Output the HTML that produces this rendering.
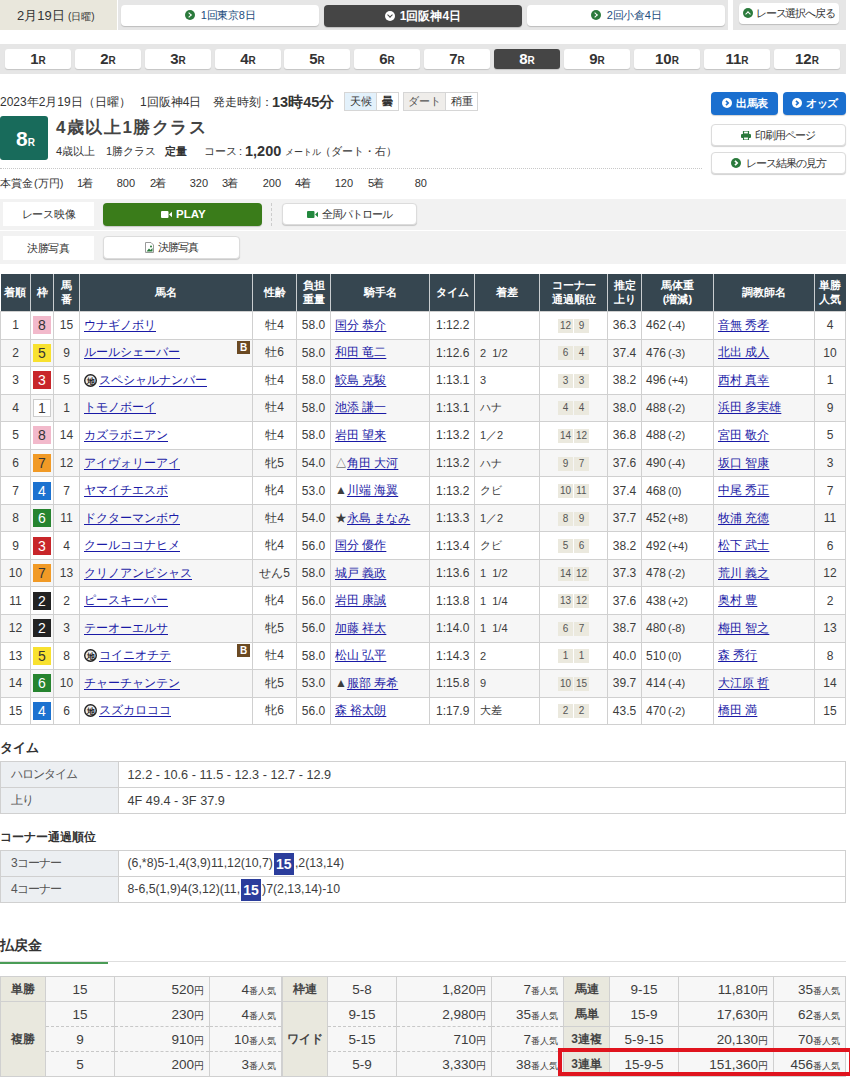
<!DOCTYPE html>
<html><head><meta charset="utf-8">
<style>
*{box-sizing:border-box;margin:0;padding:0}
html,body{width:850px;height:1078px;overflow:hidden;background:#fff}
body{font-family:"Liberation Sans",sans-serif;color:#333;font-size:12px;position:relative}
.abs{position:absolute}
.btn{position:absolute;background:#fff;border-radius:4px;box-shadow:0 1px 1px rgba(0,0,0,.18);text-align:center;white-space:nowrap}
.ico{display:inline-block;width:10px;height:10px;border-radius:50%;background:#2b7a3c;position:relative;vertical-align:-1px;margin-right:5px}
.ico:after{content:"";position:absolute;left:2.5px;top:3px;width:3px;height:3px;border-right:1.6px solid #fff;border-top:1.6px solid #fff;transform:rotate(45deg)}
.ico.w{background:#fff}
.ico.w:after{border-color:#1a6fcf}
.ico.up:after{left:3px;top:4px;transform:rotate(-45deg)}
.ico.dn{background:#fff}
.ico.dn:after{border-color:#454545;left:3px;top:2px;transform:rotate(135deg)}
/* race nums */
.rn{position:absolute;top:49px;height:20px;width:66px;background:#fff;border-radius:3px;box-shadow:0 1px 1px rgba(0,0,0,.15);text-align:center;font-weight:bold;font-size:15px;line-height:20px;color:#333}
.rn small{font-size:10px;font-weight:bold}
.rn.on{background:#454545;color:#fff}
/* main table */
table{border-collapse:collapse}
#res{position:absolute;left:0;top:274px;width:845px;table-layout:fixed}
#res th{background:#364650;color:#fff;font-weight:bold;font-size:11px;line-height:13.5px;height:37.5px;border-left:1px solid #c9cdd0;padding:0}
#res th:first-child{border-left:none}
#res td{color:#3d3d3d;border:1px solid #d0d0d0;height:27.55px;padding:0;font-size:12px;text-align:center;white-space:nowrap}
#res tr:nth-child(odd) td{background:#f6f6f6}
#res td.l{text-align:left;padding-left:4px}
#res a{color:#1a1aa6;text-decoration:underline;text-underline-offset:2px}
.wk{display:inline-block;width:18px;height:18px;line-height:18px;font-size:14px;text-align:center;vertical-align:middle}
.w1{background:#fff;border:1px solid #ccc;line-height:16px}
.w2{background:#222;color:#fff}
.w3{background:#c8262a;color:#fff}
.w4{background:#1c72d0;color:#fff}
.w5{background:#f8e12f;color:#333}
.w6{background:#26842f;color:#fff}
.w7{background:#f19a26;color:#333}
.w8{background:#f2b9cb;color:#333}
.cp{display:inline-block;width:14.5px;height:14px;line-height:14px;background:#ebe9de;font-size:10px;color:#555}.cp+.cp{margin-left:1.5px}
#res td.mg{font-size:11px;padding-left:5px}
#res td.tm{padding-left:6px}
.bk{position:absolute;right:2px;top:1.5px;width:13px;height:13px;background:#6b4a23;color:#fff;font-size:10px;line-height:13px;text-align:center;font-weight:bold}
.ch{display:inline-block;vertical-align:-3px;margin-right:2px}
.h2{position:absolute;left:0;font-weight:bold;font-size:13px;color:#333}
.st{position:absolute;left:0;width:846px}
.st td{color:#3d3d3d;border:1px solid #d0d0d0;height:26px;font-size:12.7px;padding-left:9px;white-space:nowrap}
.st.c td{font-size:12.3px}
.st td.h{background:#eceff2;width:117.5px;color:#555;padding-left:10px;font-size:12px;letter-spacing:-1px}
.p{position:absolute;top:976px;border-collapse:collapse}
.p td{color:#3d3d3d;border:1px solid #d0d0d0;height:25px;font-size:13.5px;background:#f7f7f7;text-align:center;white-space:nowrap;padding:1px 0 0 0}
.p td.h{background:#e9e8de;font-weight:bold;color:#444;font-size:12px}
.p td.r{text-align:right;padding-right:5px}
.p tr.d td:not(.h){border-top:1px dashed #c8c8c8}
.p tr.pd td:not(.h){border-bottom:1px dashed #c8c8c8}
.yen{font-size:10px}
.nk{font-size:9px}
.hl{display:inline-block;background:#2b3d9c;color:#fff;font-weight:bold;width:20px;text-align:center;height:22px;line-height:22px;font-size:14px;vertical-align:middle;margin:0 1px}
#res td.nm{position:relative}
.df{font-size:11px;margin-left:2px}
</style></head><body>

<!-- top bar -->
<div class="abs" style="left:0;top:0;width:117px;height:30px;background:#e9e7dc"></div>
<div class="abs" style="left:17px;top:8px;line-height:15px;font-size:13px;color:#333;white-space:nowrap">2月19日</div><div class="abs" style="left:68px;top:10px;line-height:13px;font-size:10px;color:#333;white-space:nowrap">(日曜)</div>
<div class="abs" style="left:118px;top:0;width:610px;height:30px;background:#e6e6e6"></div>
<div class="btn" style="left:121px;top:5px;width:198px;height:21px;line-height:20px;font-size:11px;letter-spacing:-0.3px;color:#1d4e7e"><span class="ico" style="margin-right:6px"></span>1回東京8日</div>
<div class="btn" style="left:324px;top:5px;width:198px;height:22px;line-height:22px;font-size:12px;font-weight:bold;color:#fff;background:#454545"><span class="ico dn"></span>1回阪神4日</div>
<div class="btn" style="left:527px;top:5px;width:198px;height:21px;line-height:20px;font-size:11px;letter-spacing:-0.3px;color:#1d4e7e"><span class="ico" style="margin-right:6px"></span>2回小倉4日</div>
<div class="abs" style="left:733px;top:0;width:113px;height:30px;background:#e6e6e6"></div>
<div class="btn" style="left:739px;top:3px;width:100px;height:21px;line-height:21px;font-size:11px;letter-spacing:-1.2px;color:#333;text-align:left;padding-left:4px"><span class="ico up" style="margin-right:3px"></span>レース選択へ戻る</div>

<!-- race numbers -->
<div class="abs" style="left:0;top:44px;width:846px;height:30px;background:#e6e6e6"></div>
<div class="rn" style="left:5px">1<small>R</small></div>
<div class="rn" style="left:75px">2<small>R</small></div>
<div class="rn" style="left:145px">3<small>R</small></div>
<div class="rn" style="left:215px">4<small>R</small></div>
<div class="rn" style="left:284px">5<small>R</small></div>
<div class="rn" style="left:354px">6<small>R</small></div>
<div class="rn" style="left:424px">7<small>R</small></div>
<div class="rn on" style="left:494px">8<small>R</small></div>
<div class="rn" style="left:564px">9<small>R</small></div>
<div class="rn" style="left:634px">10<small>R</small></div>
<div class="rn" style="left:704px">11<small>R</small></div>
<div class="rn" style="left:774px">12<small>R</small></div>

<!-- race info -->
<div class="abs" style="left:0;top:94px;font-size:12px;line-height:16px;white-space:nowrap;color:#333">2023年2月19日（日曜）</div>
<div class="abs" style="left:140px;top:94px;font-size:12px;line-height:16px;white-space:nowrap;color:#333">1回阪神4日</div>
<div class="abs" style="left:213px;top:94px;font-size:12px;line-height:16px;white-space:nowrap;color:#333">発走時刻：</div>
<div class="abs" style="left:272px;top:92px;font-size:14.5px;line-height:20px;white-space:nowrap;font-weight:bold;color:#333">13時45分</div>
<div class="abs" style="left:344px;top:92px;width:33px;height:19px;background:#e3f1fb;border:1px solid #d6d6d6;font-size:11px;line-height:17px;text-align:center">天候</div>
<div class="abs" style="left:376px;top:92px;width:23px;height:19px;background:#fff;border:1px solid #d6d6d6;font-size:11px;line-height:17px;text-align:center;font-weight:bold">曇</div>
<div class="abs" style="left:403px;top:92px;width:43px;height:19px;background:#efedea;border:1px solid #d6d6d6;font-size:11px;line-height:17px;text-align:center;color:#555">ダート</div>
<div class="abs" style="left:445px;top:92px;width:33px;height:19px;background:#fff;border:1px solid #d6d6d6;font-size:11px;line-height:17px;text-align:center">稍重</div>

<div class="abs" style="left:0;top:116px;width:48px;height:44px;background:#186b5b;border-radius:3px;color:#fff;text-align:center;line-height:46px;font-weight:bold;font-size:21px;white-space:nowrap;padding-left:3px">8<small style="font-size:10px">R</small></div>
<div class="abs" style="left:56px;top:117px;font-size:17px;letter-spacing:1.5px;font-weight:bold;line-height:22px;white-space:nowrap;color:#444">4歳以上1勝クラス</div>
<div class="abs" style="left:56px;top:143px;font-size:11px;line-height:16px;white-space:nowrap">4歳以上</div>
<div class="abs" style="left:106px;top:143px;font-size:11px;line-height:16px;white-space:nowrap">1勝クラス</div>
<div class="abs" style="left:165px;top:143px;font-size:11px;line-height:16px;white-space:nowrap;font-weight:bold">定量</div>
<div class="abs" style="left:204px;top:143px;font-size:11px;line-height:16px;white-space:nowrap">コース<span style="margin-left:2px">:</span></div>
<div class="abs" style="left:245px;top:141px;font-size:14.5px;line-height:20px;white-space:nowrap;font-weight:bold">1,200</div>
<div class="abs" style="left:285px;top:144px;font-size:9px;line-height:16px;white-space:nowrap">メートル</div>
<div class="abs" style="left:320px;top:143px;font-size:11px;line-height:16px;white-space:nowrap">（ダート・右）</div>

<div class="abs" style="left:0;top:168px;width:702px;border-top:1px dotted #c8c8c8"></div>
<div class="abs" style="left:0;top:176px;font-size:11px;line-height:14px;white-space:nowrap">本賞金<span style="margin-left:1px">(</span>万円<span style="margin-right:1px">)</span></div>
<div class="abs" style="left:77px;top:176px;font-size:11px;letter-spacing:-1px;line-height:14px">1着</div><div class="abs" style="left:105px;top:176px;width:30px;text-align:right;font-size:11px;line-height:14px">800</div>
<div class="abs" style="left:150px;top:176px;font-size:11px;letter-spacing:-1px;line-height:14px">2着</div><div class="abs" style="left:178px;top:176px;width:30px;text-align:right;font-size:11px;line-height:14px">320</div>
<div class="abs" style="left:222px;top:176px;font-size:11px;letter-spacing:-1px;line-height:14px">3着</div><div class="abs" style="left:251px;top:176px;width:30px;text-align:right;font-size:11px;line-height:14px">200</div>
<div class="abs" style="left:295px;top:176px;font-size:11px;letter-spacing:-1px;line-height:14px">4着</div><div class="abs" style="left:323px;top:176px;width:30px;text-align:right;font-size:11px;line-height:14px">120</div>
<div class="abs" style="left:368px;top:176px;font-size:11px;letter-spacing:-1px;line-height:14px">5着</div><div class="abs" style="left:397px;top:176px;width:30px;text-align:right;font-size:11px;line-height:14px">80</div>

<!-- right buttons -->
<div class="btn" style="left:711px;top:92px;width:67px;height:23px;background:#1a6fcf"></div>
<svg class="abs" style="left:722px;top:98px" width="10" height="10" viewBox="0 0 10 10"><circle cx="5" cy="5" r="5" fill="#fff"/><path d="M4 2.8 L6.2 5 L4 7.2" stroke="#1a6fcf" stroke-width="1.7" fill="none" transform="rotate(0 5 5)"/></svg>
<div class="abs" style="left:736px;top:96px;font-size:11px;line-height:15px;color:#fff;font-weight:bold;letter-spacing:-0.3px;white-space:nowrap">出馬表</div>
<div class="btn" style="left:783px;top:92px;width:63px;height:23px;background:#1a6fcf"></div>
<div class="abs" style="left:792px;top:98px"><svg class="abs" style="left:0px;top:0px" width="10" height="10" viewBox="0 0 10 10"><circle cx="5" cy="5" r="5" fill="#fff"/><path d="M4 2.8 L6.2 5 L4 7.2" stroke="#1a6fcf" stroke-width="1.7" fill="none" transform="rotate(0 5 5)"/></svg></div>
<div class="abs" style="left:806px;top:96px;font-size:11px;line-height:15px;color:#fff;font-weight:bold;letter-spacing:-0.3px;white-space:nowrap">オッズ</div>
<div class="btn" style="left:711px;top:124px;width:135px;height:22px;border:1px solid #dcdcdc"></div>
<svg class="abs" style="left:741px;top:131px" width="10" height="9" viewBox="0 0 10 9"><rect x="2.5" y="0" width="5" height="3" fill="none" stroke="#2a7a3c" stroke-width="1.2"/><rect x="0" y="3" width="10" height="4" rx="1" fill="#2a7a3c"/><rect x="2.5" y="6" width="5" height="3" fill="#fff" stroke="#2a7a3c" stroke-width="1.1"/></svg>
<div class="abs" style="left:755px;top:128px;font-size:11px;letter-spacing:-1px;line-height:14px;color:#333;white-space:nowrap">印刷用ページ</div>
<div class="btn" style="left:711px;top:152px;width:135px;height:22px;border:1px solid #dcdcdc"></div>
<svg class="abs" style="left:731px;top:158px" width="10" height="10" viewBox="0 0 10 10"><circle cx="5" cy="5" r="5" fill="#2a7a3c"/><path d="M4 2.8 L6.2 5 L4 7.2" stroke="#fff" stroke-width="1.7" fill="none" transform="rotate(0 5 5)"/></svg>
<div class="abs" style="left:746px;top:156px;font-size:11px;letter-spacing:-1px;line-height:14px;color:#333;white-space:nowrap">レース結果の見方</div>

<!-- video -->
<div class="abs" style="left:0;top:199px;width:846px;height:31px;background:#f2f2f2"></div>
<div class="abs" style="left:0;top:231px;width:846px;height:32.5px;background:#f2f2f2"></div>
<div class="abs" style="left:3px;top:202px;width:91px;height:23.5px;background:#fff;text-align:center;line-height:24px;font-size:11px;letter-spacing:-0.3px">レース映像</div>
<div class="abs" style="left:3px;top:235.5px;width:91px;height:24px;background:#fff;text-align:center;line-height:24px;font-size:11px;letter-spacing:-0.2px">決勝写真</div>
<div class="btn" style="left:103px;top:203px;width:159px;height:22.5px;background:#3a7c1a"></div>
<svg class="abs" style="left:161px;top:211px" width="11" height="7" viewBox="0 0 11 7"><rect x="0" y="0" width="7.5" height="7" rx="1" fill="#fff"/><path d="M8 3.5 L11 0.8 V6.2 Z" fill="#fff"/></svg>
<div class="abs" style="left:176px;top:207px;font-size:11.5px;line-height:14px;color:#fff;font-weight:bold;white-space:nowrap">PLAY</div>
<div class="abs" style="left:271px;top:203px;height:23px;border-left:1px dashed #ccc"></div>
<div class="btn" style="left:282px;top:203px;width:135px;height:22px;border:1px solid #dcdcdc"></div>
<svg class="abs" style="left:307px;top:211px" width="11" height="7" viewBox="0 0 11 7"><rect x="0" y="0" width="7.5" height="7" rx="1" fill="#23883e"/><path d="M8 3.5 L11 0.8 V6.2 Z" fill="#23883e"/></svg>
<div class="abs" style="left:322px;top:207px;font-size:11px;letter-spacing:-1px;line-height:14px;color:#333;white-space:nowrap">全周パトロール</div>
<div class="btn" style="left:103px;top:236px;width:137px;height:22.5px;border:1px solid #dcdcdc"></div>
<svg class="abs" style="left:145px;top:242px" width="9" height="11" viewBox="0 0 9 11"><path d="M0.5 0.5 H6 L8.5 3 V10.5 H0.5 Z" fill="#fff" stroke="#9a9a9a" stroke-width="1"/><path d="M1.5 9.5 L4 6.5 L5.5 8 L7.5 6 V9.5 Z" fill="#2a7a3c"/><circle cx="6" cy="4.5" r="1" fill="#2a7a3c"/></svg>
<div class="abs" style="left:158px;top:240px;font-size:11px;letter-spacing:-1px;line-height:14px;color:#333;white-space:nowrap">決勝写真</div>

<!-- TABLE_START -->
<table id="res"><colgroup><col style="width:30px"><col style="width:23px"><col style="width:26px"><col style="width:173px"><col style="width:44px"><col style="width:34px"><col style="width:99px"><col style="width:45px"><col style="width:65px"><col style="width:68px"><col style="width:34px"><col style="width:72px"><col style="width:101px"><col style="width:31px"></colgroup>
<tr><th>着順</th><th>枠</th><th>馬<br>番</th><th>馬名</th><th>性齢</th><th>負担<br>重量</th><th>騎手名</th><th>タイム</th><th>着差</th><th>コーナー<br>通過順位</th><th>推定<br>上り</th><th>馬体重<br>(増減)</th><th>調教師名</th><th>単勝<br>人気</th></tr>
<tr><td>1</td><td><span class="wk w8">8</span></td><td>15</td><td class="l nm"><a>ウナギノボリ</a></td><td>牡4</td><td>58.0</td><td class="l jk"><a>国分 恭介</a></td><td class="l tm">1:12.2</td><td class="l mg"></td><td class="cps"><span class="cp">12</span><span class="cp">9</span></td><td>36.3</td><td class="l wt">462<span class="df">(-4)</span></td><td class="l tr"><a>音無 秀孝</a></td><td>4</td></tr>
<tr><td>2</td><td><span class="wk w5">5</span></td><td>9</td><td class="l nm"><a>ルールシェーバー</a><span class="bk">B</span></td><td>牡6</td><td>58.0</td><td class="l jk"><a>和田 竜二</a></td><td class="l tm">1:12.6</td><td class="l mg">2&nbsp;&nbsp;1/2</td><td class="cps"><span class="cp">6</span><span class="cp">4</span></td><td>37.4</td><td class="l wt">476<span class="df">(-3)</span></td><td class="l tr"><a>北出 成人</a></td><td>10</td></tr>
<tr><td>3</td><td><span class="wk w3">3</span></td><td>5</td><td class="l nm"><svg class="ch" width="13" height="13" viewBox="0 0 13 13"><circle cx="6.5" cy="6.5" r="5.8" fill="#eee" stroke="#222" stroke-width="1.4"/><text x="6.5" y="10" font-size="8" font-weight="bold" text-anchor="middle" fill="#222">地</text></svg><a>スペシャルナンバー</a></td><td>牡4</td><td>58.0</td><td class="l jk"><a>鮫島 克駿</a></td><td class="l tm">1:13.1</td><td class="l mg">3</td><td class="cps"><span class="cp">3</span><span class="cp">3</span></td><td>38.2</td><td class="l wt">496<span class="df">(+4)</span></td><td class="l tr"><a>西村 真幸</a></td><td>1</td></tr>
<tr><td>4</td><td><span class="wk w1">1</span></td><td>1</td><td class="l nm"><a>トモノボーイ</a></td><td>牡4</td><td>58.0</td><td class="l jk"><a>池添 謙一</a></td><td class="l tm">1:13.1</td><td class="l mg">ハナ</td><td class="cps"><span class="cp">4</span><span class="cp">4</span></td><td>38.0</td><td class="l wt">488<span class="df">(-2)</span></td><td class="l tr"><a>浜田 多実雄</a></td><td>9</td></tr>
<tr><td>5</td><td><span class="wk w8">8</span></td><td>14</td><td class="l nm"><a>カズラボニアン</a></td><td>牡4</td><td>58.0</td><td class="l jk"><a>岩田 望来</a></td><td class="l tm">1:13.2</td><td class="l mg">1／2</td><td class="cps"><span class="cp">14</span><span class="cp">12</span></td><td>36.8</td><td class="l wt">488<span class="df">(-2)</span></td><td class="l tr"><a>宮田 敬介</a></td><td>5</td></tr>
<tr><td>6</td><td><span class="wk w7">7</span></td><td>12</td><td class="l nm"><a>アイヴォリーアイ</a></td><td>牝5</td><td>54.0</td><td class="l jk">△<a>角田 大河</a></td><td class="l tm">1:13.2</td><td class="l mg">ハナ</td><td class="cps"><span class="cp">9</span><span class="cp">7</span></td><td>37.6</td><td class="l wt">490<span class="df">(-4)</span></td><td class="l tr"><a>坂口 智康</a></td><td>3</td></tr>
<tr><td>7</td><td><span class="wk w4">4</span></td><td>7</td><td class="l nm"><a>ヤマイチエスポ</a></td><td>牝4</td><td>53.0</td><td class="l jk">▲<a>川端 海翼</a></td><td class="l tm">1:13.2</td><td class="l mg">クビ</td><td class="cps"><span class="cp">10</span><span class="cp">11</span></td><td>37.4</td><td class="l wt">468<span class="df">(0)</span></td><td class="l tr"><a>中尾 秀正</a></td><td>7</td></tr>
<tr><td>8</td><td><span class="wk w6">6</span></td><td>11</td><td class="l nm"><a>ドクターマンボウ</a></td><td>牡4</td><td>54.0</td><td class="l jk">★<a>永島 まなみ</a></td><td class="l tm">1:13.3</td><td class="l mg">1／2</td><td class="cps"><span class="cp">8</span><span class="cp">9</span></td><td>37.7</td><td class="l wt">452<span class="df">(+8)</span></td><td class="l tr"><a>牧浦 充徳</a></td><td>11</td></tr>
<tr><td>9</td><td><span class="wk w3">3</span></td><td>4</td><td class="l nm"><a>クールココナヒメ</a></td><td>牝4</td><td>56.0</td><td class="l jk"><a>国分 優作</a></td><td class="l tm">1:13.4</td><td class="l mg">クビ</td><td class="cps"><span class="cp">5</span><span class="cp">6</span></td><td>38.2</td><td class="l wt">492<span class="df">(+4)</span></td><td class="l tr"><a>松下 武士</a></td><td>6</td></tr>
<tr><td>10</td><td><span class="wk w7">7</span></td><td>13</td><td class="l nm"><a>クリノアンビシャス</a></td><td>せん5</td><td>58.0</td><td class="l jk"><a>城戸 義政</a></td><td class="l tm">1:13.6</td><td class="l mg">1&nbsp;&nbsp;1/2</td><td class="cps"><span class="cp">14</span><span class="cp">12</span></td><td>37.3</td><td class="l wt">478<span class="df">(-2)</span></td><td class="l tr"><a>荒川 義之</a></td><td>12</td></tr>
<tr><td>11</td><td><span class="wk w2">2</span></td><td>2</td><td class="l nm"><a>ピースキーパー</a></td><td>牝4</td><td>56.0</td><td class="l jk"><a>岩田 康誠</a></td><td class="l tm">1:13.8</td><td class="l mg">1&nbsp;&nbsp;1/4</td><td class="cps"><span class="cp">13</span><span class="cp">12</span></td><td>37.6</td><td class="l wt">438<span class="df">(+2)</span></td><td class="l tr"><a>奥村 豊</a></td><td>2</td></tr>
<tr><td>12</td><td><span class="wk w2">2</span></td><td>3</td><td class="l nm"><a>テーオーエルサ</a></td><td>牝5</td><td>56.0</td><td class="l jk"><a>加藤 祥太</a></td><td class="l tm">1:14.0</td><td class="l mg">1&nbsp;&nbsp;1/4</td><td class="cps"><span class="cp">6</span><span class="cp">7</span></td><td>38.7</td><td class="l wt">480<span class="df">(-8)</span></td><td class="l tr"><a>梅田 智之</a></td><td>13</td></tr>
<tr><td>13</td><td><span class="wk w5">5</span></td><td>8</td><td class="l nm"><svg class="ch" width="13" height="13" viewBox="0 0 13 13"><circle cx="6.5" cy="6.5" r="5.8" fill="#eee" stroke="#222" stroke-width="1.4"/><text x="6.5" y="10" font-size="8" font-weight="bold" text-anchor="middle" fill="#222">地</text></svg><a>コイニオチテ</a><span class="bk">B</span></td><td>牡4</td><td>58.0</td><td class="l jk"><a>松山 弘平</a></td><td class="l tm">1:14.3</td><td class="l mg">2</td><td class="cps"><span class="cp">1</span><span class="cp">1</span></td><td>40.0</td><td class="l wt">510<span class="df">(0)</span></td><td class="l tr"><a>森 秀行</a></td><td>8</td></tr>
<tr><td>14</td><td><span class="wk w6">6</span></td><td>10</td><td class="l nm"><a>チャーチャンテン</a></td><td>牝5</td><td>53.0</td><td class="l jk">▲<a>服部 寿希</a></td><td class="l tm">1:15.8</td><td class="l mg">9</td><td class="cps"><span class="cp">10</span><span class="cp">15</span></td><td>39.7</td><td class="l wt">414<span class="df">(-4)</span></td><td class="l tr"><a>大江原 哲</a></td><td>14</td></tr>
<tr><td>15</td><td><span class="wk w4">4</span></td><td>6</td><td class="l nm"><svg class="ch" width="13" height="13" viewBox="0 0 13 13"><circle cx="6.5" cy="6.5" r="5.8" fill="#eee" stroke="#222" stroke-width="1.4"/><text x="6.5" y="10" font-size="8" font-weight="bold" text-anchor="middle" fill="#222">地</text></svg><a>スズカロココ</a></td><td>牝6</td><td>56.0</td><td class="l jk"><a>森 裕太朗</a></td><td class="l tm">1:17.9</td><td class="l mg">大差</td><td class="cps"><span class="cp">2</span><span class="cp">2</span></td><td>43.5</td><td class="l wt">470<span class="df">(-2)</span></td><td class="l tr"><a>橋田 満</a></td><td>15</td></tr>
</table>
<div class="h2" style="top:740px;font-size:12.5px">タイム</div>
<table class="st" style="top:761px">
<tr><td class="h">ハロンタイム</td><td>12.2 - 10.6 - 11.5 - 12.3 - 12.7 - 12.9</td></tr>
<tr><td class="h">上り</td><td>4F 49.4 - 3F 37.9</td></tr>
</table>
<div class="h2" style="top:829px;font-size:12px">コーナー通過順位</div>
<table class="st c" style="top:850px">
<tr><td class="h">3コーナー</td><td>(6,*8)5-1,4(3,9)11,12(10,7)<span class="hl">15</span>,2(13,14)</td></tr>
<tr><td class="h">4コーナー</td><td>8-6,5(1,9)4(3,12)(11,<span class="hl">15</span>)7(2,13,14)-10</td></tr>
</table>
<div class="h2" style="top:937px;font-size:14px">払戻金</div>
<div class="abs" style="left:0;top:961px;width:846px;height:1px;background:#dedede"></div>
<div class="abs" style="left:0;top:962px;width:108px;height:1.5px;background:#4a9c56"></div>

<table class="p" style="left:0;width:282px">
<colgroup><col style="width:45px"><col style="width:69px"><col style="width:95px"><col style="width:72px"></colgroup>
<tr><td class="h">単勝</td><td>15</td><td class="r">520<span class="yen">円</span></td><td class="r">4<span class="nk">番人気</span></td></tr>
<tr class="pd"><td class="h" rowspan="3">複勝</td><td>15</td><td class="r">230<span class="yen">円</span></td><td class="r">4<span class="nk">番人気</span></td></tr>
<tr class="d pd"><td>9</td><td class="r">910<span class="yen">円</span></td><td class="r">10<span class="nk">番人気</span></td></tr>
<tr class="d"><td>5</td><td class="r">200<span class="yen">円</span></td><td class="r">3<span class="nk">番人気</span></td></tr>
</table>
<table class="p" style="left:282px;width:282px">
<colgroup><col style="width:45px"><col style="width:69px"><col style="width:95px"><col style="width:72px"></colgroup>
<tr><td class="h">枠連</td><td>5-8</td><td class="r">1,820<span class="yen">円</span></td><td class="r">7<span class="nk">番人気</span></td></tr>
<tr class="pd"><td class="h" rowspan="3">ワイド</td><td>9-15</td><td class="r">2,980<span class="yen">円</span></td><td class="r">35<span class="nk">番人気</span></td></tr>
<tr class="d pd"><td>5-15</td><td class="r">710<span class="yen">円</span></td><td class="r">7<span class="nk">番人気</span></td></tr>
<tr class="d"><td>5-9</td><td class="r">3,330<span class="yen">円</span></td><td class="r">38<span class="nk">番人気</span></td></tr>
</table>
<table class="p" style="left:563px;width:283px">
<colgroup><col style="width:46px"><col style="width:69px"><col style="width:95px"><col style="width:72px"></colgroup>
<tr><td class="h">馬連</td><td>9-15</td><td class="r">11,810<span class="yen">円</span></td><td class="r">35<span class="nk">番人気</span></td></tr>
<tr><td class="h">馬単</td><td>15-9</td><td class="r">17,630<span class="yen">円</span></td><td class="r">62<span class="nk">番人気</span></td></tr>
<tr><td class="h">3連複</td><td>5-9-15</td><td class="r">20,130<span class="yen">円</span></td><td class="r">70<span class="nk">番人気</span></td></tr>
<tr><td class="h">3連単</td><td>15-9-5</td><td class="r">151,360<span class="yen">円</span></td><td class="r">456<span class="nk">番人気</span></td></tr>
</table>
<div class="abs" style="left:558px;top:1048px;width:294.5px;height:28px;border:4.5px solid #e0141e"></div>

<!-- TABLE_END -->

</body></html>
